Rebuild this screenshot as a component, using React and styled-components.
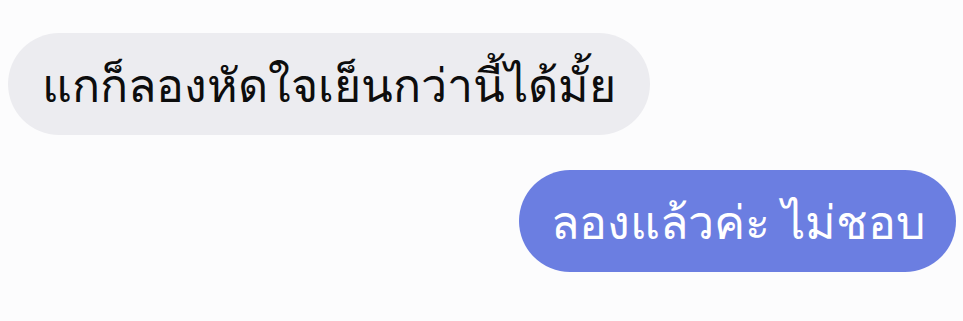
import React from "react";
import styled, { createGlobalStyle } from "styled-components";

const GlobalStyle = createGlobalStyle`
  html, body {
    margin: 0;
    padding: 0;
    background: #fcfcfd;
  }
  body {
    font-family: "Noto Sans", "DejaVu Sans", sans-serif;
  }
`;

export default function App() {
  return (
    <Chat>
      <GlobalStyle />
      <Row side="left">
        <Bubble kind="them">แกก็ลองหัดใจเย็นกว่านี้ได้มั้ย</Bubble>
      </Row>
      <Row side="right">
        <Bubble kind="me">ลองแล้วค่ะ ไม่ชอบ</Bubble>
      </Row>
    </Chat>
  );
}

const Chat = styled.div`
  width: 963px;
  height: 321px;
  box-sizing: border-box;
  padding: 33px 7px 0 8px;
  display: flex;
  flex-direction: column;
  gap: 35px;
`;

const Row = styled.div`
  display: flex;
  justify-content: ${p => (p.side === "right" ? "flex-end" : "flex-start")};
`;

const Bubble = styled.div`
  height: 102px;
  box-sizing: border-box;
  border-radius: 51px;
  display: flex;
  align-items: center;
  padding: ${p => (p.kind === "me" ? "2px 30px 0 32px" : "2px 34px 0 34px")};
  font-size: 46.5px;
  font-weight: 500;
  white-space: nowrap;
  background: ${p => (p.kind === "me" ? "#6b7ee1" : "#ececf0")};
  color: ${p => (p.kind === "me" ? "#ffffff" : "#0d0d0d")};
`;
